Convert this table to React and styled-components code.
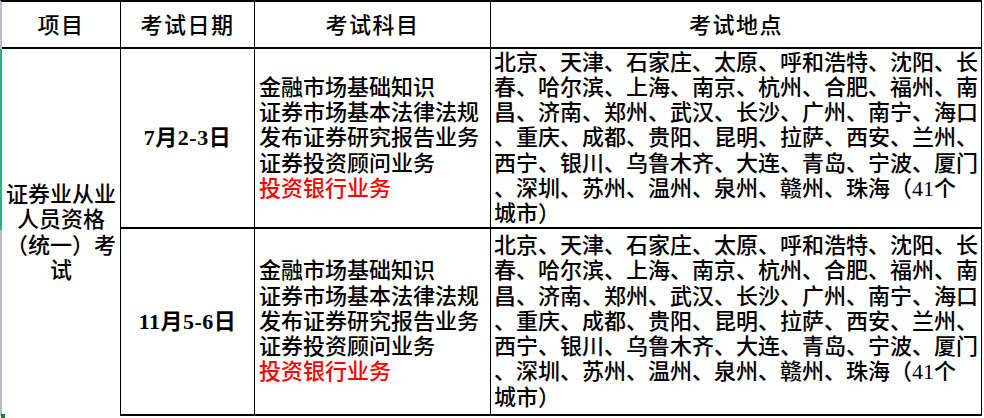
import React from "react";
import styled, { createGlobalStyle } from "styled-components";

const GlobalStyle = createGlobalStyle`
  html, body {
    margin: 0;
    padding: 0;
    background: #ffffff;
  }
  body {
    font-family: "Liberation Serif", "Noto Sans CJK SC", serif;
    color: #000000;
  }
`;

const Table = styled.div`
  display: grid;
  grid-template-columns: 119px 134px 236px 491px;
  grid-template-rows: 47px 180px 187px;
  border-top: 2px solid #000;
  border-left: 2px solid #b9bdc8;
  width: 980px;
  font-weight: 500;
  font-size: 22px;
`;

const Cell = styled.div`
  box-sizing: border-box;
  position: relative;
  display: flex;
  flex-direction: column;
  justify-content: center;
  align-items: ${(p) => (p.$center ? "center" : "flex-start")};
  text-align: ${(p) => (p.$center ? "center" : "left")};
  border-bottom: 2px solid #000;
  border-right: 1px solid #000;
  padding: ${(p) => p.$pad || "0"};
  line-height: 25.2px;
  grid-row: ${(p) => p.$row || "auto"};
`;

const HeadCell = styled(Cell)`
  align-items: center;
  letter-spacing: 1.5px;
  padding-top: 2px;
`;

const SideCell = styled(Cell)`
  border-bottom: none;
  padding: 0 3px;
  &::before {
    content: "";
    position: absolute;
    left: -2px;
    top: 0;
    width: 2px;
    height: 181px;
    background: #21b67a;
  }
`;

const Line = styled.div`
  white-space: nowrap;
  color: ${(p) => (p.$red ? "#ff0000" : "#000")};
`;

const DateText = styled.div`
  white-space: nowrap;
  letter-spacing: 0.5px;
  font-weight: 700;
`;

const Corner = styled.div`
  position: absolute;
  left: 1px;
  top: 414px;
  width: 4px;
  height: 4px;
  background: #1e7b3a;
`;

const subjects = [
  "金融市场基础知识",
  "证券市场基本法律法规",
  "发布证券研究报告业务",
  "证券投资顾问业务",
];

const cities = [
  "北京、天津、石家庄、太原、呼和浩特、沈阳、长",
  "春、哈尔滨、上海、南京、杭州、合肥、福州、南",
  "昌、济南、郑州、武汉、长沙、广州、南宁、海口",
  "、重庆、成都、贵阳、昆明、拉萨、西安、兰州、",
  "西宁、银川、乌鲁木齐、大连、青岛、宁波、厦门",
  "、深圳、苏州、温州、泉州、赣州、珠海（41个",
  "城市）",
];

const sessions = ["7月2-3日", "11月5-6日"];

function Subjects() {
  return (
    <Cell $pad="0 0 0 4px">
      {subjects.map((s) => (
        <Line key={s}>{s}</Line>
      ))}
      <Line $red>投资银行业务</Line>
    </Cell>
  );
}

function Cities() {
  return (
    <Cell $pad="0 0 0 3px">
      {cities.map((c) => (
        <Line key={c}>{c}</Line>
      ))}
    </Cell>
  );
}

export default function App() {
  return (
    <>
      <GlobalStyle />
      <Table>
        <HeadCell>项目</HeadCell>
        <HeadCell>考试日期</HeadCell>
        <HeadCell>考试科目</HeadCell>
        <HeadCell>考试地点</HeadCell>

        <SideCell $center $row="2 / 4">
          <Line>证券业从业</Line>
          <Line>人员资格</Line>
          <Line>（统一）考</Line>
          <Line>试</Line>
        </SideCell>

        {sessions.map((d) => (
          <React.Fragment key={d}>
            <Cell $center>
              <DateText>{d}</DateText>
            </Cell>
            <Subjects />
            <Cities />
          </React.Fragment>
        ))}
      </Table>
      <Corner />
    </>
  );
}
